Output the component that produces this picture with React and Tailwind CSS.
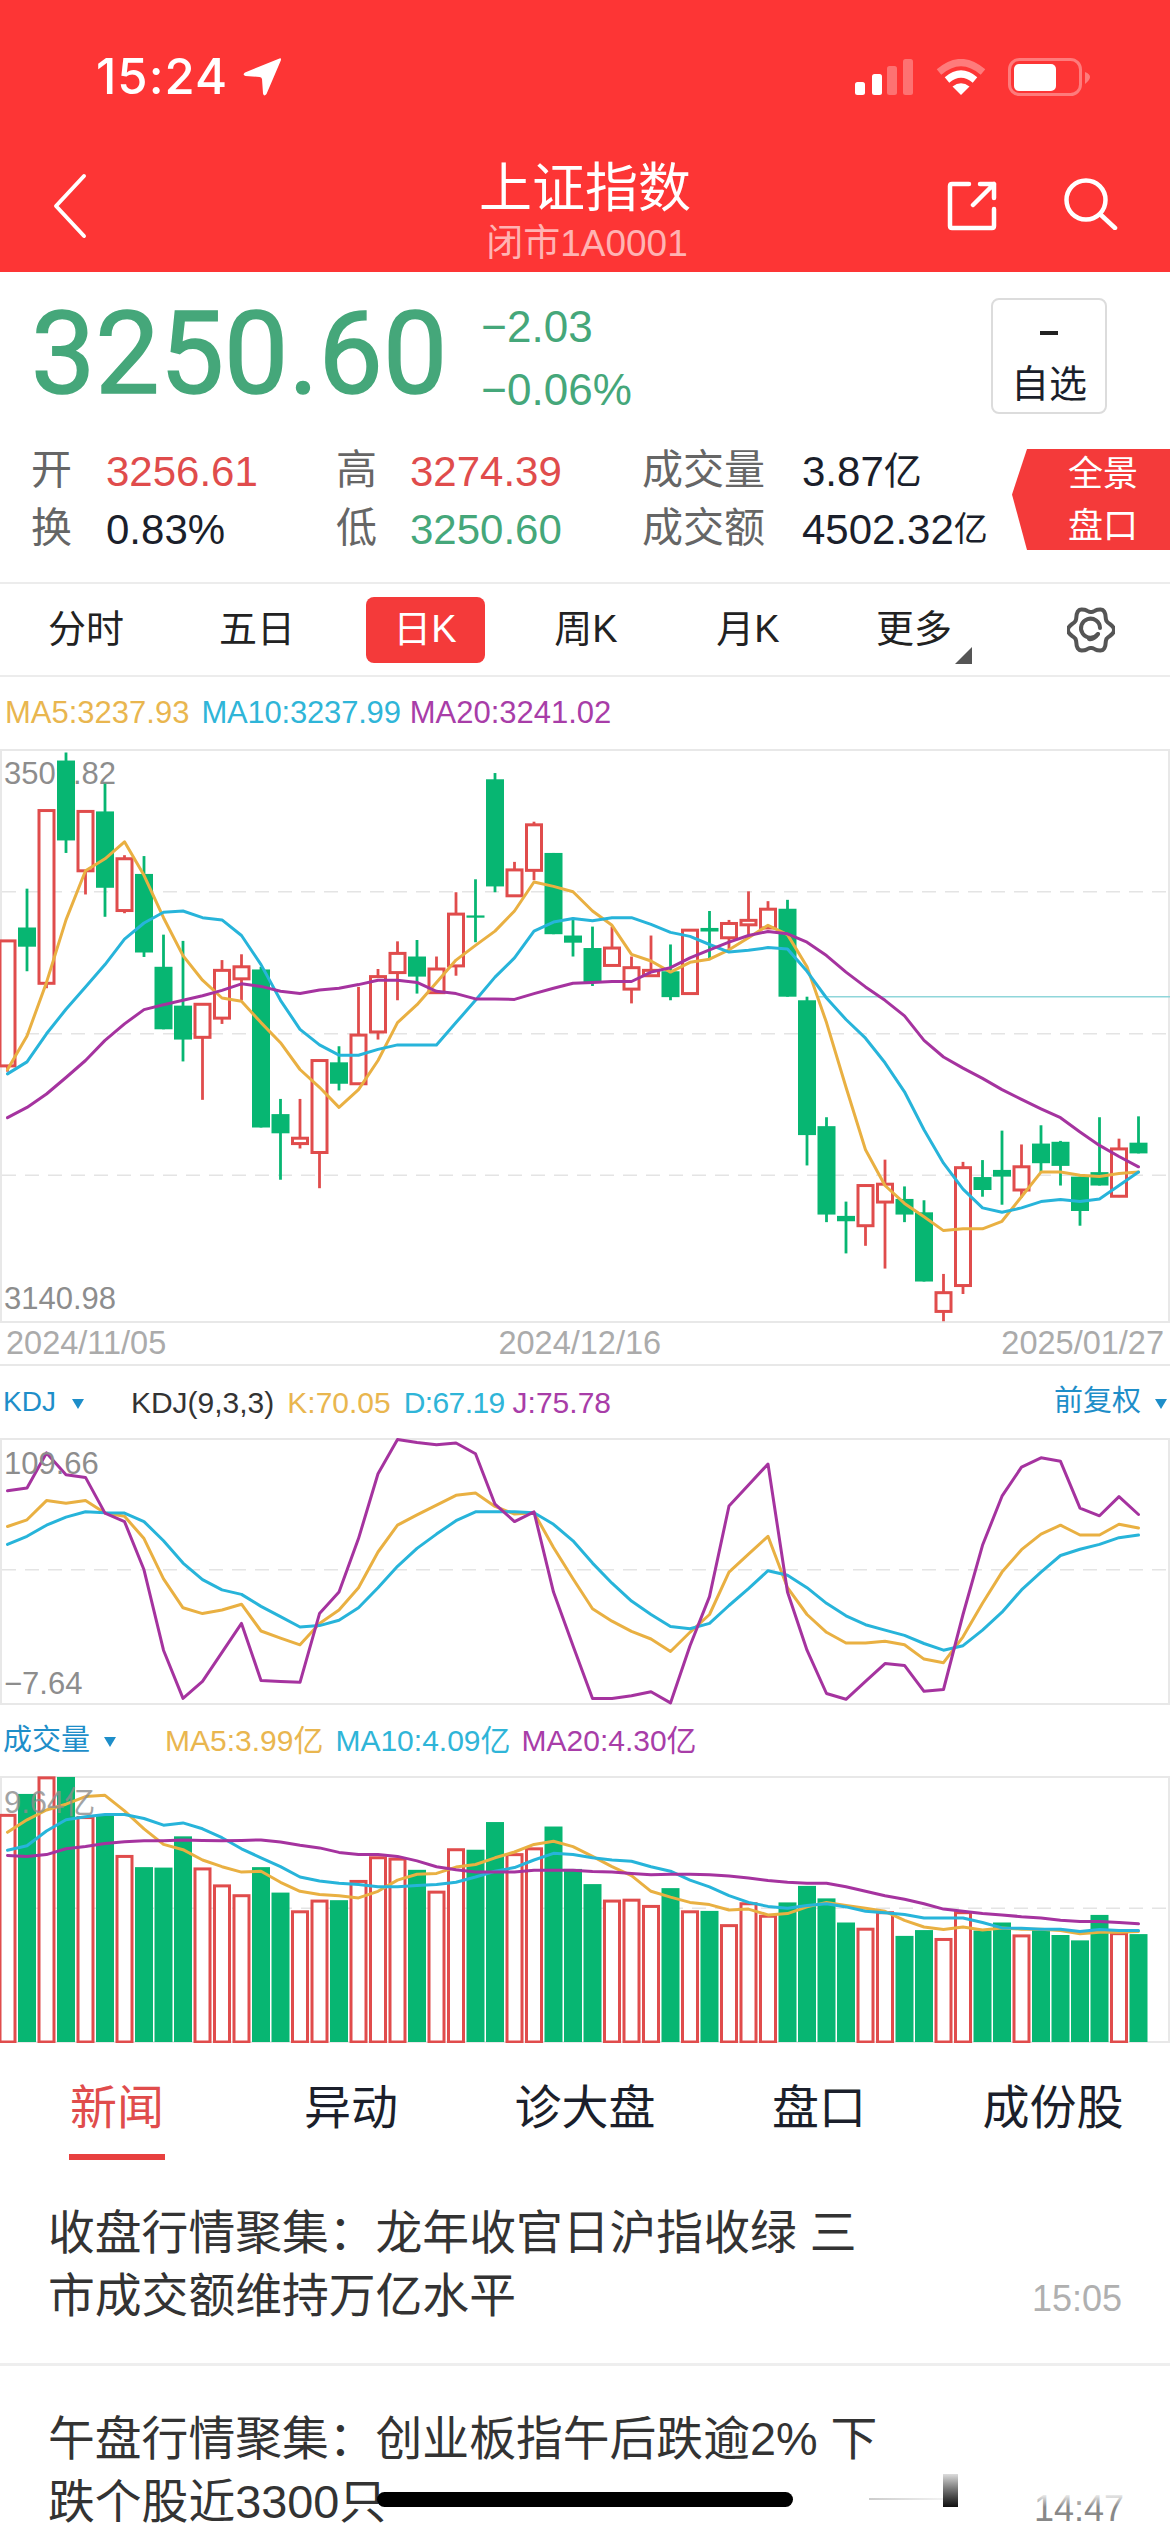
const Z = 2.24;
const X = (i) => 7.5 + 19.5 * i;

// candles: [top of wick, body top, body bottom, bottom of wick, colour]; y values are read off the 690-based crop
const candles = [
  [562, 562, 842, 855, 'r'], [445, 532, 575, 630, 'g'], [270, 270, 657, 668, 'r'], [140, 158, 337, 365, 'g'],
  [272, 272, 405, 458, 'r'], [210, 272, 443, 508, 'g'], [370, 378, 494, 500, 'r'], [372, 412, 588, 598, 'g'],
  [548, 620, 760, 760, 'g'], [562, 707, 783, 832, 'g'], [704, 704, 778, 918, 'r'], [605, 628, 735, 748, 'r'],
  [592, 620, 647, 695, 'r'], [620, 626, 980, 980, 'g'], [916, 950, 993, 1097, 'g'], [916, 1004, 1016, 1027, 'r'],
  [830, 830, 1036, 1116, 'r'], [798, 834, 882, 897, 'g'], [665, 773, 882, 882, 'r'], [625, 642, 766, 783, 'r'],
  [563, 590, 633, 695, 'r'], [560, 597, 642, 680, 'g'], [597, 625, 678, 678, 'r'], [453, 502, 618, 640, 'r'],
  [424, 505, 510, 565, 'g'], [186, 200, 440, 453, 'g'], [385, 403, 461, 461, 'r'], [295, 302, 404, 426, 'r'],
  [365, 365, 547, 547, 'g'], [510, 550, 566, 597, 'g'], [530, 578, 655, 663, 'g'], [530, 578, 617, 617, 'r'],
  [597, 622, 670, 702, 'r'], [550, 628, 640, 640, 'r'], [570, 630, 688, 695, 'g'], [538, 538, 680, 680, 'r'],
  [495, 533, 541, 605, 'g'], [515, 523, 555, 580, 'r'], [451, 516, 526, 550, 'r'], [473, 491, 533, 533, 'r'],
  [470, 490, 687, 687, 'g'], [687, 695, 997, 1065, 'g'], [957, 977, 1175, 1192, 'g'], [1146, 1178, 1190, 1262, 'g'],
  [1108, 1110, 1200, 1245, 'r'], [1052, 1107, 1147, 1296, 'r'], [1112, 1140, 1175, 1192, 'g'], [1143, 1170, 1325, 1325, 'g'],
  [1308, 1350, 1392, 1414, 'r'], [1057, 1070, 1334, 1353, 'r'], [1053, 1091, 1120, 1135, 'g'], [987, 1075, 1090, 1153, 'g'],
  [1018, 1068, 1120, 1137, 'r'], [975, 1016, 1060, 1080, 'g'], [1010, 1012, 1066, 1110, 'g'], [1090, 1090, 1167, 1200, 'g'],
  [957, 1080, 1110, 1110, 'g'], [1005, 1028, 1134, 1136, 'r'], [955, 1014, 1038, 1038, 'g'],
];

const ma5 = [850, 775, 655, 515, 405, 378, 340, 415, 510, 595, 650, 690, 697, 745, 790, 850, 890, 935, 895, 830, 745, 705, 655, 605, 572, 540, 495, 430, 440, 452, 495, 527, 592, 607, 632, 610, 603, 582, 555, 527, 548, 620, 745, 890, 1030, 1110, 1150, 1180, 1211, 1207, 1207, 1190, 1135, 1080, 1080, 1087, 1090, 1083, 1080];
const ma10 = [860, 833, 770, 715, 665, 615, 558, 522, 498, 495, 510, 515, 550, 615, 695, 760, 795, 818, 818, 805, 795, 795, 795, 745, 695, 643, 600, 540, 520, 512, 517, 510, 510, 525, 543, 552, 570, 587, 583, 577, 580, 630, 690, 738, 780, 835, 900, 985, 1060, 1118, 1160, 1170, 1160, 1146, 1141, 1146, 1140, 1110, 1080];
const ma20 = [958, 935, 905, 868, 830, 785, 748, 716, 705, 695, 685, 673, 658, 664, 675, 680, 672, 668, 660, 650, 650, 655, 675, 680, 692, 692, 693, 680, 668, 657, 655, 653, 653, 632, 622, 600, 582, 565, 550, 541, 546, 565, 595, 632, 665, 695, 730, 785, 822, 847, 870, 895, 917, 938, 958, 990, 1020, 1045, 1068];

const kLine = [373, 358, 315, 321, 315, 343, 350, 400, 490, 555, 568, 560, 547, 607, 623, 638, 590, 560, 510, 430, 370, 347, 325, 303, 298, 328, 345, 342, 420, 490, 557, 585, 608, 625, 653, 610, 570, 475, 435, 395, 510, 570, 610, 634, 634, 630, 638, 670, 678, 620, 545, 475, 425, 390, 370, 392, 392, 368, 376];
const dLine = [413, 395, 370, 352, 340, 342, 343, 362, 405, 455, 492, 515, 525, 552, 575, 598, 595, 583, 555, 510, 462, 422, 390, 360, 340, 340, 340, 342, 368, 405, 455, 500, 540, 570, 597, 602, 590, 550, 512, 472, 482, 510, 545, 573, 593, 605, 617, 635, 650, 640, 605, 565, 515, 475, 438, 424, 413, 398, 392];
const jLine = [293, 287, 208, 257, 263, 343, 362, 470, 650, 758, 720, 655, 590, 718, 720, 722, 568, 520, 400, 255, 178, 185, 190, 186, 210, 323, 362, 340, 520, 640, 758, 758, 752, 743, 768, 640, 530, 327, 280, 233, 520, 650, 747, 760, 720, 680, 684, 742, 738, 570, 415, 305, 240, 219, 227, 332, 349, 306, 346];

const bars = [
  [1020, 'r'], [972, 'g'], [936, 'r'], [934, 'g'], [1025, 'r'], [1020, 'g'], [1112, 'r'], [1136, 'g'], [1137, 'g'], [1067, 'g'],
  [1140, 'r'], [1178, 'r'], [1200, 'r'], [1136, 'g'], [1193, 'g'], [1236, 'r'], [1212, 'r'], [1210, 'g'], [1168, 'r'], [1115, 'r'],
  [1118, 'r'], [1142, 'g'], [1192, 'r'], [1097, 'r'], [1097, 'g'], [1035, 'g'], [1108, 'r'], [1095, 'r'], [1045, 'g'], [1140, 'g'],
  [1174, 'g'], [1212, 'r'], [1210, 'r'], [1224, 'r'], [1183, 'g'], [1236, 'r'], [1234, 'g'], [1267, 'r'], [1218, 'r'], [1246, 'r'],
  [1215, 'g'], [1178, 'g'], [1206, 'g'], [1260, 'g'], [1275, 'r'], [1238, 'r'], [1290, 'g'], [1277, 'g'], [1298, 'r'], [1238, 'r'],
  [1278, 'g'], [1260, 'g'], [1290, 'r'], [1277, 'g'], [1288, 'g'], [1300, 'g'], [1243, 'g'], [1285, 'r'], [1286, 'g'],
];
const vol5 = [1058, 1030, 1008, 995, 978, 975, 1010, 1050, 1085, 1097, 1120, 1135, 1147, 1145, 1170, 1190, 1197, 1200, 1205, 1190, 1165, 1152, 1150, 1136, 1130, 1115, 1102, 1085, 1078, 1090, 1112, 1135, 1155, 1190, 1203, 1215, 1220, 1232, 1230, 1243, 1240, 1225, 1215, 1222, 1228, 1235, 1255, 1270, 1276, 1270, 1277, 1272, 1275, 1275, 1278, 1285, 1282, 1282, 1280];
const vol10 = [1098, 1088, 1055, 1030, 1023, 1018, 1018, 1027, 1042, 1037, 1050, 1070, 1095, 1115, 1135, 1158, 1167, 1172, 1175, 1180, 1180, 1177, 1175, 1170, 1158, 1145, 1137, 1120, 1105, 1108, 1115, 1120, 1123, 1135, 1145, 1165, 1180, 1200, 1215, 1224, 1228, 1222, 1218, 1225, 1235, 1238, 1242, 1250, 1250, 1250, 1260, 1272, 1273, 1275, 1275, 1280, 1276, 1278, 1278];
const vol20 = [1110, 1112, 1108, 1095, 1090, 1083, 1079, 1077, 1077, 1075, 1076, 1077, 1076, 1075, 1080, 1087, 1093, 1103, 1108, 1108, 1112, 1122, 1135, 1142, 1147, 1147, 1147, 1143, 1143, 1143, 1146, 1147, 1150, 1153, 1152, 1152, 1153, 1156, 1160, 1166, 1170, 1172, 1172, 1180, 1190, 1200, 1208, 1218, 1230, 1235, 1240, 1243, 1247, 1250, 1255, 1258, 1258, 1260, 1263];

const YELLOW = '#e9b042';
const BLUE = '#27b4da';
const PURPLE = '#a5339f';
const RED = '#e04c4c';
const GREEN = '#07b672';

const gearPath = () => {
  const pts = [];
  for (let d = 0; d < 360; d += 6) {
    const t = (d * Math.PI) / 180;
    const r = 20.5 + 2.6 * Math.cos(6 * t);
    pts.push(`${(24 + r * Math.cos(t)).toFixed(1)},${(24 + r * Math.sin(t)).toFixed(1)}`);
  }
  return pts.join(' ');
};

const Line = ({ data, color, toY, width = 3 }) => (
  <polyline
    points={data.map((v, i) => `${X(i)},${toY(v).toFixed(1)}`).join(' ')}
    fill="none"
    stroke={color}
    strokeWidth={width}
    strokeLinejoin="round"
    strokeLinecap="round"
  />
);

const Dash = ({ y }) => (
  <line x1="2" x2="1168" y1={y} y2={y} stroke="#e4e4e4" strokeWidth="1.5" strokeDasharray="14 9" />
);

const Frame = () => <div className="absolute inset-0 border-x-2 border-y-2 border-[#e8e8e8]" />;

const AxisLabel = ({ className, children }) => (
  <span className={`absolute text-[31px] leading-[30px] text-[#8d8d8d] ${className}`}>{children}</span>
);

const MainChart = () => {
  const y = (z) => 690 + z / Z - 749;
  return (
    <div className="relative h-[574px]">
      <Frame />
      <AxisLabel className="left-[4px] top-[10px]">3509.82</AxisLabel>
      <AxisLabel className="left-[4px] top-[535px]">3140.98</AxisLabel>
      <svg width="1170" height="574" className="relative block">
        <Dash y={y(452)} />
        <Dash y={y(770)} />
        <Dash y={y(1087)} />
        <line x1="817" x2="1170" y1={y(687)} y2={y(687)} stroke="#8fd6da" strokeWidth="1.5" />
        {candles.map(([hi, top, bot, lo, c], i) => {
          const col = c === 'r' ? RED : GREEN;
          return (
            <g key={i}>
              <line x1={X(i)} x2={X(i)} y1={y(hi)} y2={y(lo)} stroke={col} strokeWidth="2.8" />
              {c === 'r' ? (
                <rect x={X(i) - 7.5} y={y(top)} width="15" height={(bot - top) / Z} fill="#fff" stroke={col} strokeWidth="3" />
              ) : (
                <rect x={X(i) - 9} y={y(top)} width="18" height={(bot - top) / Z} fill={col} />
              )}
            </g>
          );
        })}
        <Line data={ma5} color={YELLOW} toY={y} />
        <Line data={ma10} color={BLUE} toY={y} />
        <Line data={ma20} color={PURPLE} toY={y} />
      </svg>
    </div>
  );
};

const KdjChart = () => {
  const y = (z) => 1360 + z / Z - 1438;
  return (
    <div className="relative h-[267px]">
      <Frame />
      <svg width="1170" height="267" className="relative block">
        <Dash y={y(470)} />
        <Line data={kLine} color={YELLOW} toY={y} />
        <Line data={dLine} color={BLUE} toY={y} />
        <Line data={jLine} color={PURPLE} toY={y} />
      </svg>
      <AxisLabel className="left-[4px] top-[11px]">109.66</AxisLabel>
      <AxisLabel className="left-[4px] top-[231px]">−7.64</AxisLabel>
    </div>
  );
};

const VolumeChart = () => {
  const y = (z) => 1360 + z / Z - 1776;
  return (
    <div className="relative h-[267px]">
      <Frame />
      <svg width="1170" height="267" className="relative block">
        <Dash y={y(1228)} />
        {bars.map(([top, c], i) =>
          c === 'r' ? (
            <rect key={i} x={X(i) - 7.5} y={y(top)} width="15" height={266 - y(top)} fill="#fff" stroke={RED} strokeWidth="3" />
          ) : (
            <rect key={i} x={X(i) - 9} y={y(top)} width="18" height={266 - y(top)} fill={GREEN} />
          ),
        )}
        <Line data={vol5} color={YELLOW} toY={y} />
        <Line data={vol10} color={BLUE} toY={y} />
        <Line data={vol20} color={PURPLE} toY={y} />
      </svg>
      <AxisLabel className="left-[4px] top-[12px] opacity-80">9.64亿</AxisLabel>
    </div>
  );
};

const Caret = ({ className = '' }) => (
  <span className={`mt-[3px] h-0 w-0 border-x-[6px] border-t-[10px] border-x-transparent border-t-[#1e8ec9] ${className}`} />
);

const StatusBar = () => (
  <div className="flex h-[38px] items-center justify-between pl-[96px] pr-[79px] text-white">
    <div className="flex items-center">
      <span className="text-[49px] font-medium leading-[38px] tracking-[1px] [font-family:Inter,sans-serif]">15:24</span>
      <svg width="40" height="40" viewBox="0 0 40 40" className="ml-[14px]" fill="#fff">
        <path d="M37.5 1.5 L3 15.5 Q0 18 3.5 19 L17.5 20 Q19.5 20 20 22 L21 36.5 Q22 40 24.5 37 L38.8 3.5 Q39.5 0.5 37.5 1.5 Z" />
      </svg>
    </div>
    <div className="flex items-center">
      <svg width="58" height="36" viewBox="0 0 58 36" fill="#fff">
        <rect x="0" y="23" width="10" height="13" rx="2.5" />
        <rect x="17" y="15" width="10" height="21" rx="2.5" />
        <rect x="32" y="7" width="10" height="29" rx="2.5" fillOpacity="0.3" />
        <rect x="48" y="0" width="10" height="36" rx="2.5" fillOpacity="0.3" />
      </svg>
      <svg width="50" height="36" viewBox="0 0 50 36" className="ml-[23px]" fill="none" stroke="#fff" strokeWidth="7">
        <path d="M3 13 Q25 -6 47 13" strokeOpacity="0.35" />
        <path d="M11 21 Q25 9 39 21" />
        <path d="M25 36 L16.5 27.5 Q25 21 33.5 27.5 Z" fill="#fff" stroke="none" />
      </svg>
      <svg width="83" height="38" viewBox="0 0 83 38" className="ml-[22px]">
        <rect x="1.5" y="1.5" width="71" height="35" rx="10" fill="none" stroke="#fff" strokeOpacity="0.35" strokeWidth="3" />
        <rect x="6" y="6" width="42" height="27" rx="5" fill="#fff" />
        <path d="M77 14 Q82 16 82 19 Q82 22 77 26 Z" fill="#fff" fillOpacity="0.35" />
      </svg>
    </div>
  </div>
);

const Header = () => (
  <header className="h-[272px] bg-[#fd3535] pt-[58px]">
    <StatusBar />
    <div className="mt-[62px] flex">
      <div className="flex w-[240px] pl-[53px] pt-[15px]">
        <svg width="34" height="66" viewBox="0 0 34 66" fill="none" stroke="#fff" strokeWidth="4" strokeLinecap="round" strokeLinejoin="round">
          <path d="M31 3 L3 33 L31 63" />
        </svg>
      </div>
      <div className="flex-1 pt-[3px] text-center">
        <div className="text-[53px] leading-[56px] text-white">上证指数</div>
        <div className="mt-[9px] pl-[4px] text-[37px] leading-[36px] text-[#ffb3b3]">闭市1A0001</div>
      </div>
      <div className="flex w-[240px] items-start pl-[17px] pt-[23px]">
        <svg width="50" height="50" viewBox="0 0 50 50" fill="none" stroke="#fff" strokeWidth="4.5" strokeLinecap="round" strokeLinejoin="round">
          <path d="M22 3 H5 Q3 3 3 5 V45 Q3 47 5 47 H45 Q47 47 47 45 V28" />
          <path d="M26 24 L47 3 M33 3 H47 V17" />
        </svg>
        <svg width="54" height="52" viewBox="0 0 54 52" className="ml-[67px] -mt-[3px]" fill="none" stroke="#fff" strokeWidth="4.5" strokeLinecap="round">
          <circle cx="22" cy="22" r="19.5" />
          <path d="M37 37 L51 50" />
        </svg>
      </div>
    </div>
  </header>
);

const Stat = ({ children, className = '' }) => (
  <div className={`flex h-[58px] items-center ${className}`}>{children}</div>
);

const Label = ({ children }) => <Stat className="text-[41px] text-[#666]">{children}</Stat>;

const Quote = () => (
  <section className="h-[310px] bg-white">
    <div className="flex items-start pt-[26px]">
      <div className="ml-[31px] mt-[6px] text-[114.5px] leading-[100px] text-[#45a77a] [-webkit-text-stroke:1.5px_#45a77a] [font-family:Roboto,sans-serif]">
        3250.60
      </div>
      <div className="ml-[34px] mt-[11px] text-[44px] text-[#45a77a]">
        <div className="h-[63px] leading-[36px]">−2.03</div>
        <div className="leading-[36px]">−0.06%</div>
      </div>
      <div className="ml-auto mr-[63px] flex h-[116px] w-[116px] flex-col items-center rounded-[8px] border-2 border-[#dcdcdc] pt-[18px]">
        <span className="mt-[13px] h-[4px] w-[18px] bg-[#222]" />
        <span className="mt-[29px] text-[38px] leading-[40px] text-[#1b1f2b]">自选</span>
      </div>
    </div>
    <div className="mt-[28px] flex items-start">
      <div className="ml-[31px] grid w-[981px] grid-cols-[75px_230px_74px_232px_160px_1fr] text-[42px]">
        <Label>开</Label>
        <Stat className="text-[#e04c4c]">3256.61</Stat>
        <Label>高</Label>
        <Stat className="text-[#e04c4c]">3274.39</Stat>
        <Label>成交量</Label>
        <Stat className="text-[#1b1f2b]">3.87<span className="text-[38px]">亿</span></Stat>
        <Label>换</Label>
        <Stat className="text-[#1b1f2b]">0.83%</Stat>
        <Label>低</Label>
        <Stat className="text-[#45a77a]">3250.60</Stat>
        <Label>成交额</Label>
        <Stat className="text-[#1b1f2b]">4502.32<span className="text-[34px]">亿</span></Stat>
      </div>
      <div className="mt-[7px] flex h-[101px] flex-1 flex-col items-center justify-center bg-[#f43a3a] pl-[24px] text-[35px] leading-[52px] text-white [clip-path:polygon(15px_0,100%_0,100%_100%,15px_100%,0_45%)]">
        <span>全景</span>
        <span>盘口</span>
      </div>
    </div>
  </section>
);

const periods = [
  { name: '分时', w: 'w-[172px]' },
  { name: '五日', w: 'w-[170px]' },
  { name: '日K', w: 'w-[166px]', active: true },
  { name: '周K', w: 'w-[156px]' },
  { name: '月K', w: 'w-[168px]' },
  { name: '更多', w: 'w-[164px]', more: true },
];

const PeriodTabs = () => (
  <nav className="flex h-[95px] items-center border-y-2 border-[#ececec] text-[38px] text-[#222]">
    {periods.map((p) => (
      <div key={p.name} className={`relative flex h-[66px] items-center justify-center ${p.w}`}>
        {p.active ? (
          <span className="flex h-[66px] w-[119px] items-center justify-center rounded-[8px] bg-[#f43a3a] text-white">{p.name}</span>
        ) : (
          p.name
        )}
        {p.more && (
          <svg width="17" height="17" viewBox="0 0 17 17" className="absolute bottom-[-1px] right-[24px]">
            <path d="M17 0 V17 H0 Z" fill="#555" />
          </svg>
        )}
      </div>
    ))}
    <div className="flex flex-1 justify-center pl-[16px]">
      <svg width="48" height="48" viewBox="0 0 48 48" fill="none" stroke="#555" strokeWidth="4" strokeLinecap="round">
        <polygon points={gearPath()} strokeLinejoin="round" />
        <path d="M31 28 A9.5 9.5 0 1 1 33 22" />
        <path d="M31 28 Q27 34 22 33" />
      </svg>
    </div>
  </nav>
);

const Legend = ({ children, className = '' }) => (
  <div className={`flex items-center text-[30px] ${className}`}>{children}</div>
);

const newsTabs = ['新闻', '异动', '诊大盘', '盘口', '成份股'];

const NewsTabs = () => (
  <div className="grid h-[119px] grid-cols-5 bg-white pt-[35px] text-[47px] text-[#1b1f2b]">
    {newsTabs.map((t, i) => (
      <div key={t} className="flex flex-col items-center">
        <span className={`leading-[60px] ${i === 0 ? 'text-[#e04c4c]' : ''}`}>{t}</span>
        {i === 0 && <span className="mt-[16px] h-[6px] w-[96px] bg-[#e8403f]" />}
      </div>
    ))}
  </div>
);

const News = () => (
  <div className="relative bg-white text-[46.8px] leading-[63px] text-[#333]">
    <div className="relative h-[204px] border-b-[3px] border-[#eeeeee] pl-[48px] pt-[40px]">
      收盘行情聚集：龙年收官日沪指收绿 三
      <br />
      市成交额维持万亿水平
      <span className="absolute right-[48px] top-[119px] text-[36px] leading-[36px] text-[#b0b0b0]">15:05</span>
    </div>
    <div className="relative h-[167px] pl-[48px] pt-[42px]">
      午盘行情聚集：创业板指午后跌逾2% 下
      <br />
      跌个股近3300只
      <span className="absolute right-[46px] top-[125px] text-[36px] leading-[36px] text-[#888]">14:47</span>
      <span className="absolute right-0 top-[105px] h-[36px] w-[300px] bg-gradient-to-b from-white from-60% to-transparent" />
    </div>
    {/* home indicator and the smear next to it, both sit over the list */}
    <span className="absolute left-[377px] top-[330px] h-[15px] w-[416px] rounded-full bg-black" />
    <span className="absolute left-[869px] top-[336px] h-[2px] w-[74px] bg-gradient-to-r from-[#ccc] to-[#f2f2f2]" />
    <span className="absolute left-[943px] top-[312px] h-[33px] w-[15px] bg-gradient-to-b from-[#ddd] to-[#111]" />
  </div>
);

export default function App() {
  return (
    <div className="relative h-[2532px] w-[1170px] overflow-hidden bg-white [font-family:'Liberation_Sans','Noto_Sans_CJK_SC',sans-serif]">
      <Header />
      <Quote />
      <PeriodTabs />

      <Legend className="h-[72px] pl-[5px] text-[31px]">
        <span className="text-[#e9b64f]">MA5:3237.93</span>
        <span className="ml-[12px] tracking-[-0.2px] text-[#2fb5d8]">MA10:3237.99</span>
        <span className="ml-[9px] text-[#a83da8]">MA20:3241.02</span>
      </Legend>
      <MainChart />
      <div className="flex h-[43px] items-center justify-between border-b-2 border-[#e8e8e8] px-[6px] text-[32.5px] text-[#ababab]">
        <span>2024/11/05</span>
        <span className="ml-[-8px]">2024/12/16</span>
        <span>2025/01/27</span>
      </div>

      <Legend className="h-[72px] px-[3px]">
        <span className="text-[28px] text-[#1e8ec9]">KDJ</span>
        <Caret className="ml-[16px]" />
        <span className="ml-[47px] text-[#333]">KDJ(9,3,3)</span>
        <span className="ml-[13px] text-[#e9b64f]">K:70.05</span>
        <span className="ml-[13px] tracking-[-0.6px] text-[#2fb5d8]">D:67.19</span>
        <span className="ml-[8px] text-[#a83da8]">J:75.78</span>
        <span className="ml-auto text-[29px] text-[#1e8ec9]">前复权</span>
        <Caret className="ml-[14px]" />
      </Legend>
      <KdjChart />

      <Legend className="h-[71px] pl-[3px] text-[30.5px]">
        <span className="text-[29px] text-[#1e8ec9]">成交量</span>
        <Caret className="ml-[14px]" />
        <span className="ml-[49px] text-[#e9b64f]">MA5:3.99亿</span>
        <span className="ml-[12px] text-[#2fb5d8]">MA10:4.09亿</span>
        <span className="ml-[11px] text-[#a83da8]">MA20:4.30亿</span>
      </Legend>
      <VolumeChart />

      <NewsTabs />
      <News />
    </div>
  );
}
